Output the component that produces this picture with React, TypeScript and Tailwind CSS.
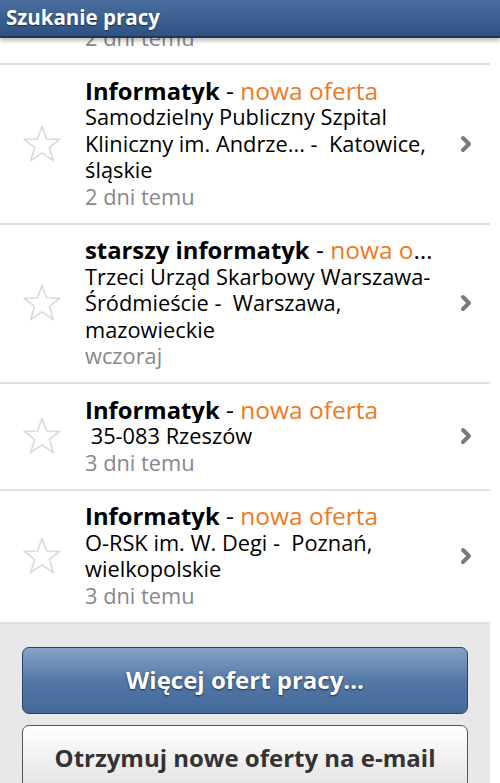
import { ChevronRight } from "lucide-react";

type Offer = {
  title: string;
  lines: string;
  date: string;
};

const offers: Offer[] = [
  {
    title: "Informatyk",
    lines: "Samodzielny Publiczny Szpital Kliniczny im. Andrze... -  Katowice, śląskie",
    date: "2 dni temu",
  },
  {
    title: "starszy informatyk",
    lines: "Trzeci Urząd Skarbowy Warszawa- Śródmieście -  Warszawa, mazowieckie",
    date: "wczoraj",
  },
  {
    title: "Informatyk",
    lines: " 35-083 Rzeszów",
    date: "3 dni temu",
  },
  {
    title: "Informatyk",
    lines: "O-RSK im. W. Degi -  Poznań, wielkopolskie",
    date: "3 dni temu",
  },
];

const StarIcon = () => (
  <svg width="40" height="40" viewBox="0 0 40 40">
    <polygon
      points="20,2.5 24.6,15 38,15.2 27.4,23.4 31.3,36.6 20,28.8 8.7,36.6 12.6,23.4 2,15.2 15.4,15"
      fill="none"
      stroke="#d9d9d9"
      strokeWidth="1.6"
      strokeLinejoin="round"
    />
  </svg>
);

const App = () => {
  return (
    <div
      className="w-[500px] h-[783px] overflow-hidden bg-white relative"
      style={{ fontFamily: '"Open Sans", "Noto Sans", sans-serif' }}
    >
      {/* header */}
      <div className="relative z-10 h-[38px] bg-gradient-to-b from-[#4a6f9f] to-[#2d5282] border-b-2 border-[#1f3656] shadow-[0_3px_4px_rgba(0,0,0,0.25)] flex items-center px-[6px] pb-[2px]">
        <span className="text-white font-bold text-[20.5px] [text-shadow:0_1px_1px_#1a2c45]">
          Szukanie pracy
        </span>
      </div>

      <div className="w-[490px]">
        {/* partially scrolled row */}
        <div className="h-[27px] overflow-hidden border-b-2 border-[#e0e0e0]">
          <div className="pl-[85px] -mt-[13px] text-[21.8px] leading-[26.5px] text-[#888]">
            2 dni temu
          </div>
        </div>

        {offers.map((offer, i) => (
          <div
            key={i}
            className="flex items-center py-[12.5px] border-b-2 border-[#e0e0e0]"
          >
            <div className="w-[85px] flex justify-center pr-[2px]">
              <StarIcon />
            </div>
            <div className="w-[356px] text-[21.8px] leading-[26.5px] text-black">
              <div className="truncate w-[352px] text-[24.5px]">
                <span className="font-bold text-[23.8px]">{offer.title}</span>
                <span> - </span>
                <span className="text-[#ee7a1e]">nowa oferta</span>
              </div>
              <div className="whitespace-pre-wrap">{offer.lines}</div>
              <div className="text-[#888]">{offer.date}</div>
            </div>
            <div className="flex-1 flex justify-center">
              <ChevronRight size={24} strokeWidth={4} color="#7a7a7a" />
            </div>
          </div>
        ))}

        {/* buttons */}
        <div className="bg-[#e8e8e8] pt-[23px] px-[22px] pb-[40px] flex flex-col gap-[11px]">
          <button className="h-[67px] rounded-[7px] border border-[#2a4264] bg-gradient-to-b from-[#86a2c6] via-[#5479a7] to-[#43689a] text-white font-bold text-[24px] [text-shadow:0_1px_2px_#1c2e48]">
            Więcej ofert pracy...
          </button>
          <button className="h-[67px] rounded-[7px] border border-[#555] bg-gradient-to-b from-white to-[#e2e2e2] text-[#333] font-bold text-[24px]">
            Otrzymuj nowe oferty na e-mail
          </button>
        </div>
      </div>
    </div>
  );
};

export default App;
